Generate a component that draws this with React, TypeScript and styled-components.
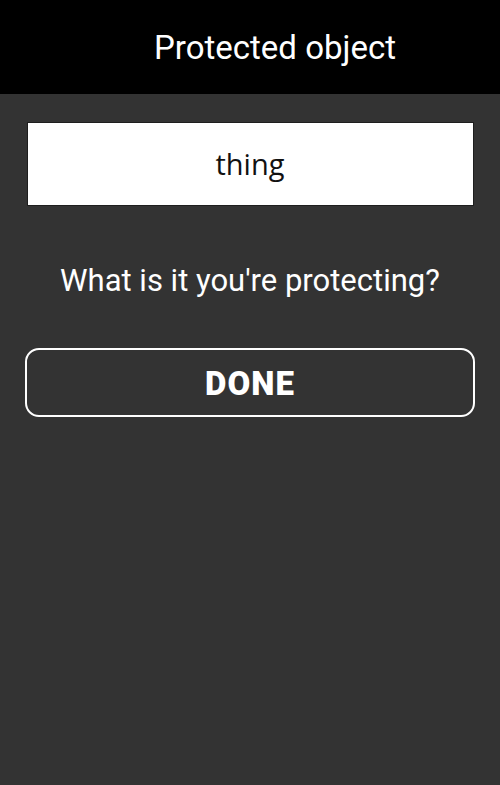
import React from "react";
import styled, { createGlobalStyle } from "styled-components";

const Global = createGlobalStyle`
  html, body { margin: 0; padding: 0; background: #333333; }
  body { font-family: Roboto, "Liberation Sans", sans-serif; }
`;

const Screen = styled.div`
  width: 500px;
  height: 785px;
  background: #333333;
  display: flex;
  flex-direction: column;
`;

const Header = styled.header`
  height: 94px;
  background: #000000;
  display: flex;
  align-items: center;
  justify-content: center;
  padding-left: 50px;
  box-sizing: border-box;
`;

const Title = styled.h1`
  margin: 0;
  font-family: Roboto, sans-serif;
  font-weight: 400;
  font-size: 33px;
  color: #ffffff;
`;

const Body = styled.main`
  display: flex;
  flex-direction: column;
  align-items: center;
  padding: 28px 25px 0;
`;

const Field = styled.input`
  box-sizing: border-box;
  width: 447px;
  height: 84px;
  background: #ffffff;
  border: 1px solid #1e1e1e;
  text-align: center;
  font-family: "Open Sans", sans-serif;
  font-size: 29px;
  color: #111111;
  outline: none;
  padding: 0 0 2px;
`;

const Prompt = styled.p`
  margin: 57px 0 0;
  font-family: Roboto, sans-serif;
  font-size: 31px;
  color: #ffffff;
  line-height: 36px;
`;

const Button = styled.button`
  box-sizing: border-box;
  margin-top: 49px;
  width: 450px;
  height: 69px;
  background: transparent;
  border: 2.5px solid #ffffff;
  border-radius: 14px;
  color: #ffffff;
  font-family: Roboto, sans-serif;
  font-weight: 900;
  font-size: 33px;
  letter-spacing: 1px;
  padding: 2px 0 0;
  cursor: pointer;
`;

export default function App() {
  return (
    <>
      <Global />
      <Screen>
        <Header>
          <Title>Protected object</Title>
        </Header>
        <Body>
          <Field defaultValue="thing" />
          <Prompt>What is it you're protecting?</Prompt>
          <Button>DONE</Button>
        </Body>
      </Screen>
    </>
  );
}
